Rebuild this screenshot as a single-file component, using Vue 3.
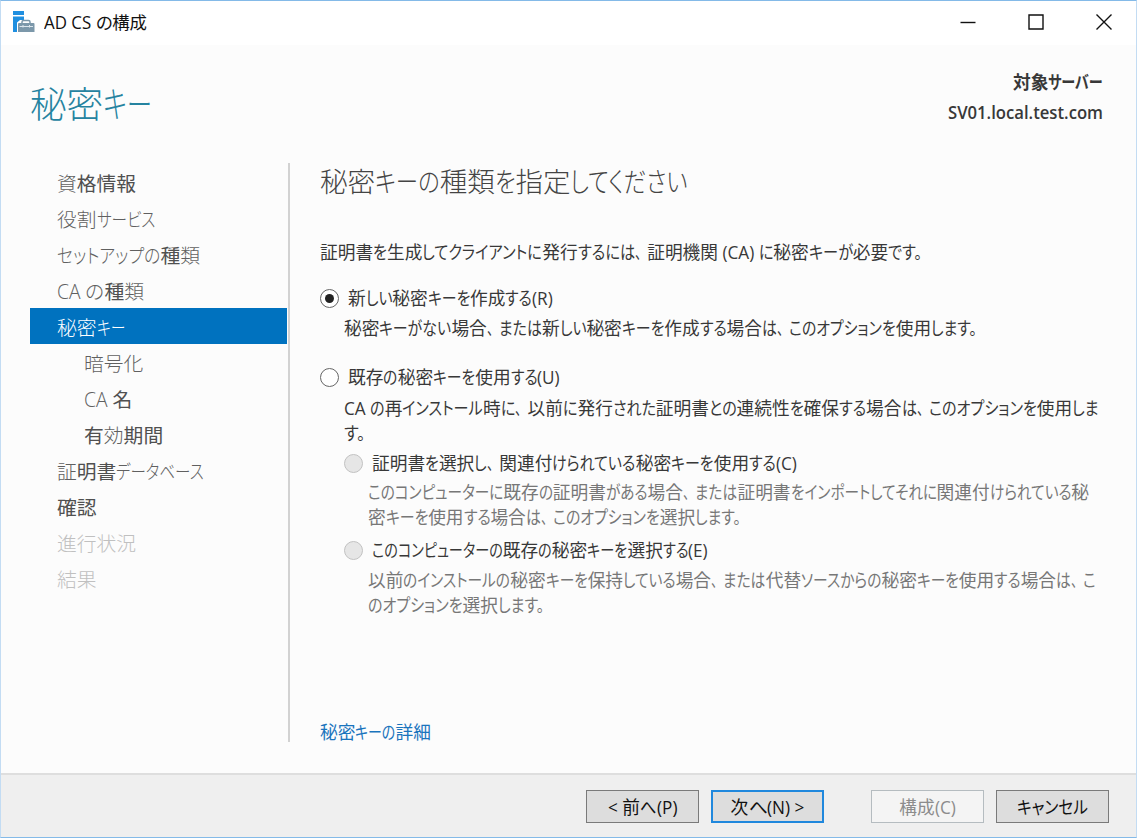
<script setup>
const steps = [
  { text: '資格情報', width: 80 },
  { text: '役割サービス', width: 98 },
  { text: 'セットアップの種類', width: 143 },
  { text: 'CA の種類', width: 87 },
  { text: '秘密キー', width: 68, active: true },
  { text: '暗号化', width: 60, sub: true },
  { text: 'CA 名', width: 49, sub: true },
  { text: '有効期間', width: 80, sub: true },
  { text: '証明書データベース', width: 147 },
  { text: '確認', width: 40 },
  { text: '進行状況', width: 80, disabled: true },
  { text: '結果', width: 40, disabled: true }
]

// Kanji whose strokes land on whole pixels and read darker in the step list.
const crisp = '格情報種有期間明書確認名'

const kindOf = (c) => {
  if (c === '、') return 'comma'
  if (/[\u3000-\u30ff]/.test(c)) return 'kana'
  return /[\u3400-\u9fff]/.test(c) ? 'kanji' : 'latin'
}

// Sets kana in a narrow UI style: full-width kanji, condensed kana, so the line takes the given width.
const vFit = {
  mounted(el, { value, modifiers }) {
    const runs = []
    for (const c of el.textContent.trim()) {
      const kind = kindOf(c)
      const dark = Boolean(modifiers.crisp) && crisp.includes(c)
      const last = runs[runs.length - 1]
      if (last && last.kind === kind && last.dark === dark) last.text += c
      else runs.push({ kind, dark, text: c })
    }
    el.textContent = ''
    for (const run of runs) {
      run.outer = document.createElement('span')
      run.inner = document.createElement('span')
      run.outer.className = 'run'
      run.inner.className = `run-ink run-${run.kind}${run.dark ? ' run-dark' : ''}`
      run.inner.textContent = run.text
      run.outer.append(run.inner)
      el.append(run.outer)
      run.width = run.inner.getBoundingClientRect().width
    }
    const sum = (kind) => runs.filter((r) => r.kind === kind).reduce((t, r) => t + r.width, 0)
    const kana = sum('kana')
    const kanji = sum('kanji')
    const latin = sum('latin')
    const scale = { kanji: 1, comma: 0.7 }
    scale.latin = kana || kanji ? 0.97 : value / latin
    scale.kana = kana ? (value - kanji - sum('comma') * scale.comma - latin * scale.latin) / kana : 1
    for (const run of runs) {
      run.outer.style.width = `${run.width * scale[run.kind]}px`
      run.inner.style.transform = `scaleX(${scale[run.kind]})`
    }
  }
}
</script>

<template>
  <div class="window">
    <header class="titlebar">
      <svg class="app-icon" width="23" height="23" viewBox="0 0 23 23">
        <path fill="#1f8fe0" d="M0 0h11v4H0zM0 5.500h11V9H7L4 11.500v9.500H0z" />
        <path fill="none" stroke="#7c98aa" stroke-width="1.500" d="M9 12.500v-1.500q0-1.500 1.500-1.500h5q1.500 0 1.500 1.500v1.500" />
        <path fill="#7c98aa" d="M5 13q0-1 1-1h14.500q1 0 1 1v8H5z" />
        <path stroke="#dce6ed" stroke-width="1" fill="none" d="M6.500 15.500h13.500M10 14v2.500M16.500 14v2.500" />
      </svg>
      <span v-fit="103" class="line app-name">AD CS の構成</span>
      <div class="controls">
        <svg width="16" height="16" viewBox="0 0 16 16"><path d="M.5 8.500h15" /></svg>
        <svg width="16" height="16" viewBox="0 0 16 16"><path d="M1 1h14v14H1z" /></svg>
        <svg width="16" height="16" viewBox="0 0 16 16"><path d="M.5.5l15 15M15.500.5l-15 15" /></svg>
      </div>
    </header>

    <div class="heading">
      <h1 v-fit="122" class="line">秘密キー</h1>
      <div class="target">
        <span v-fit="90" class="line">対象サーバー</span>
        <span v-fit="155" class="line">SV01.local.test.com</span>
      </div>
    </div>

    <div class="body">
      <nav class="steps">
        <div v-for="s in steps" :key="s.text" class="step" :class="{ active: s.active, sub: s.sub, disabled: s.disabled }">
          <span v-fit.crisp="s.width" class="line">{{ s.text }}</span>
        </div>
      </nav>

      <main class="content">
        <h2 v-fit="368" class="line">秘密キーの種類を指定してください</h2>
        <p v-fit="602" class="line intro">証明書を生成してクライアントに発行するには、証明機関 (CA) に秘密キーが必要です。</p>

        <div class="option">
          <i class="radio checked"></i>
          <span v-fit="205" class="line">新しい秘密キーを作成する(R)</span>
        </div>
        <div class="desc">
          <div v-fit="633" class="line">秘密キーがない場合、または新しい秘密キーを作成する場合は、このオプションを使用します。</div>
        </div>

        <div class="option second">
          <i class="radio"></i>
          <span v-fit="212" class="line">既存の秘密キーを使用する(U)</span>
        </div>
        <div class="desc">
          <div v-fit="755" class="line">CA の再インストール時に、以前に発行された証明書との連続性を確保する場合は、このオプションを使用しま</div>
          <div v-fit="21" class="line">す。</div>
        </div>

        <div class="nested">
          <div class="option">
            <i class="radio off"></i>
            <span v-fit="425" class="line">証明書を選択し、関連付けられている秘密キーを使用する(C)</span>
          </div>
          <div class="desc muted">
            <div v-fit="721" class="line">このコンピューターに既存の証明書がある場合、または証明書をインポートしてそれに関連付けられている秘</div>
            <div v-fit="373" class="line">密キーを使用する場合は、このオプションを選択します。</div>
          </div>
          <div class="option last">
            <i class="radio off"></i>
            <span v-fit="336" class="line">このコンピューターの既存の秘密キーを選択する(E)</span>
          </div>
          <div class="desc muted">
            <div v-fit="728" class="line">以前のインストールの秘密キーを保持している場合、または代替ソースからの秘密キーを使用する場合は、こ</div>
            <div v-fit="176" class="line">のオプションを選択します。</div>
          </div>
        </div>

        <a v-fit="111" class="line more">秘密キーの詳細</a>
      </main>
    </div>

    <footer class="footer">
      <button><span v-fit="69" class="line">&lt; 前へ(P)</span></button>
      <button class="primary"><span v-fit="74" class="line">次へ(N) &gt;</span></button>
      <button class="config" disabled><span v-fit="60" class="line">構成(C)</span></button>
      <button><span v-fit="71" class="line">キャンセル</span></button>
    </footer>
  </div>
</template>

<style>
body {
  margin: 0;
}
.run {
  display: inline-block;
  vertical-align: top;
  white-space: pre;
}
.run-ink {
  display: inline-block;
  vertical-align: top;
  transform-origin: 0 50%;
  white-space: pre;
}
.run-comma {
  font-feature-settings: normal;
}
.step:not(.active) .run-dark {
  color: #505050;
  font-weight: 400;
}
</style>

<style scoped>
.window {
  box-sizing: border-box;
  width: 1137px;
  height: 838px;
  display: flex;
  flex-direction: column;
  background: #fcfcfc;
  border: 1px solid #84bae8;
  border-left-color: #c3dcf3;
  border-right-color: #c3dcf3;
  font-family: "Open Sans", "Noto Sans CJK JP", sans-serif;
  font-size: 17.7px;
  color: #383838;
  overflow: hidden;
}
.line {
  display: block;
  margin: 0;
  line-height: 25px;
  height: 25px;
  white-space: nowrap;
  font-feature-settings: "palt";
}
.titlebar {
  height: 44px;
  flex: none;
  display: flex;
  align-items: center;
  background: #fff;
  padding: 0 24px 2px 12px;
  box-sizing: border-box;
}
.app-icon {
  margin-right: 8px;
}
.app-name {
  color: #111;
  font-size: 17.4px;
}
.controls {
  margin-left: auto;
  display: flex;
  gap: 52px;
}
.controls path {
  fill: none;
  stroke: #111;
  stroke-width: 1.4;
}
.heading {
  height: 118px;
  flex: none;
  display: flex;
  justify-content: space-between;
  padding: 0 33px 0 29px;
}
h1.line {
  margin-top: 37px;
  font-size: 36.500px;
  height: 44px;
  line-height: 44px;
  font-weight: 200;
  color: #2583a0;
}
.target {
  margin-top: 25px;
  display: flex;
  flex-direction: column;
  align-items: flex-end;
  gap: 5px;
  font-weight: 600;
}
.body {
  flex: 1;
  display: flex;
  min-height: 0;
}
.steps {
  width: 257px;
  height: 578px;
  padding: 1px 1px 0 29px;
  border-right: 2px solid #d2d2d2;
  flex: none;
}
.step {
  height: 36px;
  display: flex;
  align-items: center;
  padding-left: 27px;
  font-size: 19.8px;
  font-weight: 300;
  color: #606060;
}
.step .line {
  padding-top: 2px;
}
.step.sub {
  padding-left: 54px;
}
.step.active {
  background: #0072bf;
  color: #fff;
}
.step.disabled {
  color: #c0c0c0;
}
.content {
  padding-left: 30px;
}
h2.line {
  height: 40px;
  line-height: 38px;
  font-size: 27.500px;
  font-weight: 300;
  color: #444;
}
.intro {
  margin-top: 37px;
}
.option {
  display: flex;
  align-items: center;
  gap: 9px;
  height: 25px;
}
.intro + .option {
  margin-top: 21px;
}
.radio {
  box-sizing: border-box;
  width: 19px;
  height: 19px;
  border: 1.500px solid #666;
  border-radius: 50%;
  background: #fff;
  display: grid;
  place-items: center;
}
.radio.checked::after {
  content: "";
  width: 9px;
  height: 9px;
  border-radius: 50%;
  background: #222;
}
.radio.off {
  background: #e6e6e6;
  border-color: #c2c2c2;
}
.desc {
  padding-left: 24px;
  margin-top: 5px;
}
.option.second {
  margin-top: 24px;
}
.option.second + .desc {
  margin-top: 6px;
}
.nested {
  padding-left: 24px;
  margin-top: 5px;
}
.muted {
  color: #777;
  margin-top: 4px;
}
.muted .line {
  height: 24.500px;
}
.option.last {
  margin-top: 9px;
}
.option.last + .muted {
  margin-top: 5px;
}
.more {
  margin-top: 103px;
  color: #1a74bd;
}
.footer {
  height: 64px;
  flex: none;
  display: flex;
  align-items: flex-start;
  justify-content: flex-end;
  gap: 12px;
  padding: 15px 27px 0 0;
  box-sizing: border-box;
  background: #efefef;
  border-top: 2px solid #dedede;
}
button {
  box-sizing: border-box;
  width: 113px;
  height: 33px;
  padding: 1px 0 0;
  margin: 0;
  display: flex;
  align-items: center;
  justify-content: center;
  border: 1.500px solid #7a7a7a;
  background: #dddddd;
  color: #111;
  font: inherit;
}
button.primary {
  border: 2px solid #2088dd;
}
button.config {
  margin-left: 35px;
  background: #f4f4f4;
  border-color: #b5bcc0;
  color: #8c8c8c;
}
</style>
